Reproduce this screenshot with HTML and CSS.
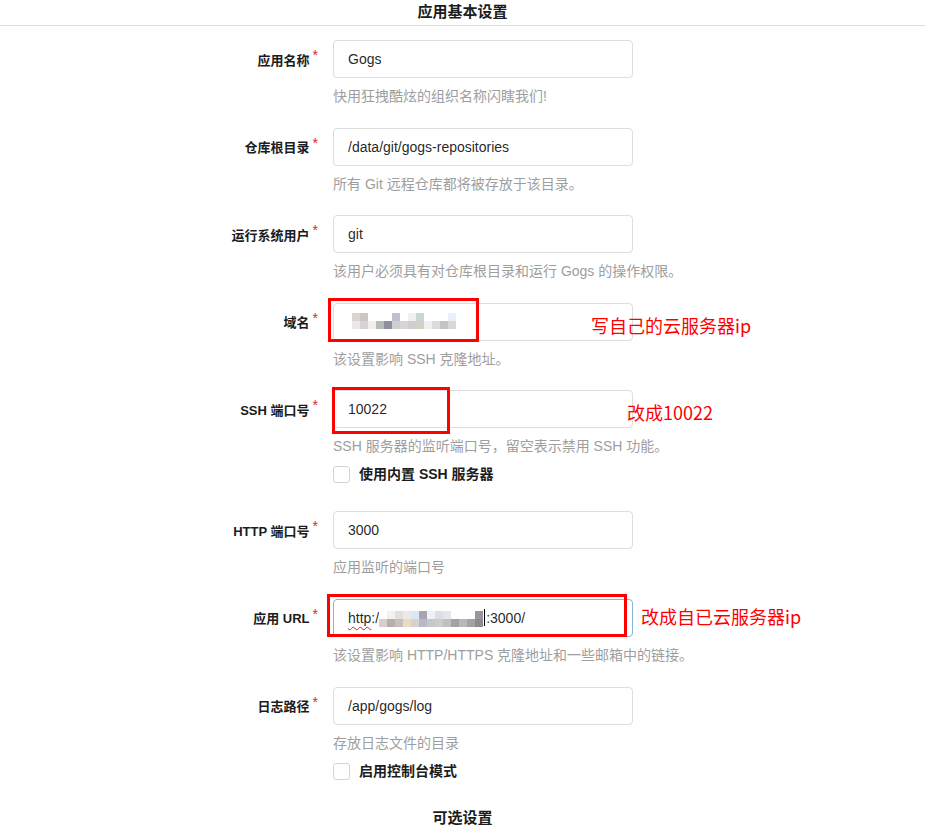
FILE: index.html
```html
<!DOCTYPE html>
<html lang="zh-CN">
<head>
<meta charset="utf-8">
<title>应用基本设置</title>
<link rel="stylesheet" href="styles.css">
</head>
<body>
<div class="page">
  <h3 class="title">应用基本设置</h3>
  <div class="form">
    <div class="field">
      <label class="label">应用名称<span class="req">*</span></label>
      <div class="input">Gogs</div>
      <div class="help">快用狂拽酷炫的组织名称闪瞎我们!</div>
    </div>
    <div class="field">
      <label class="label">仓库根目录<span class="req">*</span></label>
      <div class="input">/data/git/gogs-repositories</div>
      <div class="help">所有 Git 远程仓库都将被存放于该目录。</div>
    </div>
    <div class="field">
      <label class="label">运行系统用户<span class="req">*</span></label>
      <div class="input">git</div>
      <div class="help">该用户必须具有对仓库根目录和运行 Gogs 的操作权限。</div>
    </div>
    <div class="field">
      <label class="label">域名<span class="req">*</span></label>
      <div class="input">
        <div class="mosaic mosaic-domain">
          <i style="background:#d8d4d2"></i><i style="background:#ccc6c3"></i><i style="background:#fff"></i><i style="background:#fff"></i><i style="background:#fff"></i><i style="background:#c0bfd0"></i><i style="background:#fff"></i><i style="background:#f0f0ef"></i><i style="background:#c9d6d3"></i><i style="background:#fff"></i><i style="background:#fff"></i><i style="background:#fff"></i><i style="background:#e9f0f8"></i>
          <i style="background:#ebe8eb"></i><i style="background:#d6d3d0"></i><i style="background:#f1eeec"></i><i style="background:#b4bdb8"></i><i style="background:#8d909f"></i><i style="background:#cfcfcf"></i><i style="background:#d8d4d4"></i><i style="background:#cfcdd1"></i><i style="background:#d2d1c6"></i><i style="background:#f0f0f0"></i><i style="background:#dedade"></i><i style="background:#c4c4c4"></i><i style="background:#d8d8d8"></i>
        </div>
      </div>
      <div class="help">该设置影响 SSH 克隆地址。</div>
      <div class="mark mark-1"></div>
      <div class="note note-1">写自己的云服务器ip</div>
    </div>
    <div class="field tall">
      <label class="label">SSH 端口号<span class="req">*</span></label>
      <div class="input">10022</div>
      <div class="help">SSH 服务器的监听端口号，留空表示禁用 SSH 功能。</div>
      <div class="check"><span class="box"></span>使用内置 SSH 服务器</div>
      <div class="mark mark-2"></div>
      <div class="note note-2">改成10022</div>
    </div>
    <div class="field">
      <label class="label">HTTP 端口号<span class="req">*</span></label>
      <div class="input">3000</div>
      <div class="help">应用监听的端口号</div>
    </div>
    <div class="field">
      <label class="label">应用 URL<span class="req">*</span></label>
      <div class="input focus">
        <span class="wavy">http</span>:/<div class="mosaic mosaic-url">
          <i style="background:#fff"></i><i style="background:#f4f2f1"></i><i style="background:#e4dfdd"></i><i style="background:#ece8e6"></i><i style="background:#d9e8f2"></i><i style="background:#a9a4ad"></i><i style="background:#eef2f6"></i><i style="background:#dddde6"></i><i style="background:#e6e6ea"></i><i style="background:#fff"></i><i style="background:#fff"></i><i style="background:#fff"></i><i style="background:#9b969d"></i>
          <i style="background:#d6cfcc"></i><i style="background:#b8aeab"></i><i style="background:#c9bfbc"></i><i style="background:#e9dcc7"></i><i style="background:#d8d2ce"></i><i style="background:#b7b8c8"></i><i style="background:#c7c6cf"></i><i style="background:#c6d0c4"></i><i style="background:#c0c0c0"></i><i style="background:#a59fa6"></i><i style="background:#b5b8bc"></i><i style="background:#a3a3a3"></i><i style="background:#8f8a92"></i>
        </div><span class="caret"></span>:3000/
      </div>
      <div class="help">该设置影响 HTTP/HTTPS 克隆地址和一些邮箱中的链接。</div>
      <div class="mark mark-3"></div>
      <div class="note note-3">改成自已云服务器ip</div>
    </div>
    <div class="field tall">
      <label class="label">日志路径<span class="req">*</span></label>
      <div class="input">/app/gogs/log</div>
      <div class="help">存放日志文件的目录</div>
      <div class="check"><span class="box"></span>启用控制台模式</div>
    </div>
  </div>
  <h3 class="title second">可选设置</h3>
</div>
</body>
</html>
```

FILE: styles.css
```css
body {
  margin: 0;
  background: #fff;
  font-family: "Liberation Sans", "Noto Sans CJK SC", sans-serif;
  color: rgba(0, 0, 0, 0.87);
}

.page {
  width: 925px;
}

.title {
  margin: 0;
  height: 25px;
  line-height: 24px;
  text-align: center;
  font-size: 15px;
  font-weight: 700;
  color: #1b1c1d;
  border-bottom: 1px solid #dedede;
}

.title.second {
  line-height: 20px;
}

.form {
  padding-top: 14px;
}

.field {
  position: relative;
  display: grid;
  grid-template-columns: 318px 300px;
  column-gap: 15px;
  margin-bottom: 21.6px;
}

.field.tall {
  margin-bottom: 28px;
}

.label {
  grid-column: 1;
  display: flex;
  justify-content: flex-end;
  align-items: center;
  height: 38px;
  font-size: 13px;
  font-weight: 700;
  color: #1b1c1d;
  white-space: nowrap;
}

.req {
  align-self: flex-start;
  margin-top: 8px;
  margin-left: 3px;
  font-size: 14px;
  line-height: 14px;
  font-weight: 400;
  color: #db2828;
}

.input {
  grid-column: 2;
  box-sizing: border-box;
  height: 38px;
  display: flex;
  align-items: center;
  padding: 0 14px;
  border: 1px solid rgba(34, 36, 38, 0.15);
  border-radius: 4px;
  font-size: 14px;
  line-height: 36px;
  color: rgba(0, 0, 0, 0.87);
  white-space: nowrap;
}

.input.focus {
  border-color: #85b7d9;
}

.help {
  grid-column: 2;
  margin-top: 8px;
  font-size: 14px;
  line-height: 20px;
  color: #9e9e9e;
  white-space: nowrap;
}

.check {
  grid-column: 2;
  margin-top: 10px;
  display: flex;
  align-items: center;
  gap: 9px;
  height: 17px;
  font-size: 14px;
  line-height: 17px;
  font-weight: 700;
  color: #1b1c1d;
}

.box {
  width: 17px;
  height: 17px;
  box-sizing: border-box;
  border: 1px solid #d4d4d5;
  border-radius: 3px;
  background: #fff;
}

.mosaic {
  display: grid;
  grid-template-columns: repeat(13, 8px);
  grid-auto-rows: 8px;
}

.mosaic i {
  display: block;
}

.mosaic-domain {
  margin-left: 4px;
  margin-top: -2px;
}

.mosaic-url {
  margin-top: 2px;
}

.wavy {
  text-decoration: underline wavy #e02020;
  text-decoration-thickness: 1px;
  text-underline-offset: 3px;
}

.caret {
  display: inline-block;
  width: 1px;
  height: 17px;
  background: #000;
  margin: 0 1px 0 1px;
}

.mark {
  position: absolute;
  box-sizing: border-box;
  border: 3px solid #ff0000;
}

.mark-1 {
  left: 328px;
  top: -5px;
  width: 151px;
  height: 44px;
}

.mark-2 {
  left: 332px;
  top: -3px;
  width: 118px;
  height: 47px;
}

.mark-3 {
  left: 327px;
  top: -5px;
  width: 300px;
  height: 43px;
}

.note {
  position: absolute;
  font-family: "Noto Sans CJK SC", "Liberation Sans", sans-serif;
  font-size: 18px;
  line-height: 24px;
  color: #ff0000;
  white-space: nowrap;
}

.note-1 {
  left: 591px;
  top: 10px;
}

.note-2 {
  left: 627px;
  top: 10px;
}

.note-3 {
  left: 641px;
  top: 5px;
}
```
